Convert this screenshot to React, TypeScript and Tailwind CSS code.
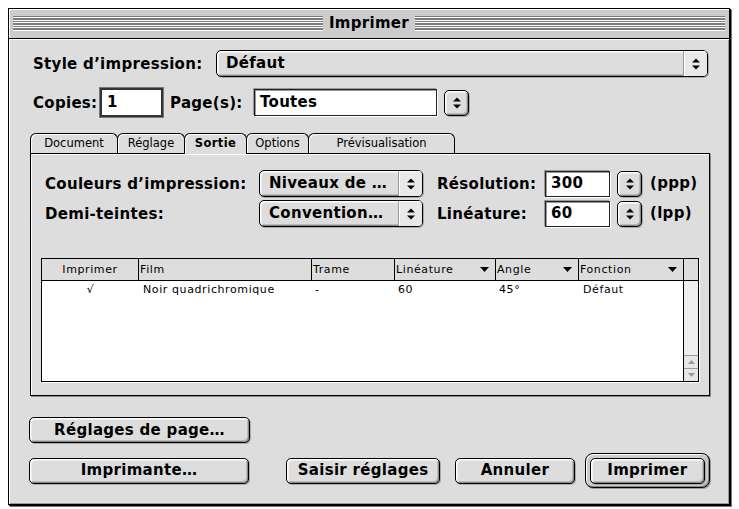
import React from 'react';

const font = "font-['DejaVu_Sans',sans-serif]";
const label = 'text-[15px] font-bold tracking-[0.3px] text-black leading-none whitespace-nowrap';
const bevel =
  'border border-black rounded-[5px] bg-[#dddddd] shadow-[inset_1px_1px_0_#fff,inset_2px_2px_0_#eeeeee,inset_-1px_-1px_0_#888,inset_-2px_-2px_0_#bbbbbb,1px_1px_0_#aaaaaa]';
const field =
  'border border-[#222] bg-white shadow-[inset_1px_1px_0_#999,1px_1px_0_#fff,-1px_-1px_0_#9a9a9a] flex items-center pl-[5px]';
const small = 'text-[11px] tracking-[0.6px] text-black leading-none whitespace-nowrap';

function UpDown({ color = '#000' }: { color?: string }) {
  return (
    <svg width="10" height="14" viewBox="0 0 10 14">
      <path d="M5 1.5 L9 5.5 L1 5.5 Z" fill={color} />
      <path d="M1 8.5 L9 8.5 L5 12.5 Z" fill={color} />
    </svg>
  );
}

function SortArrow() {
  return (
    <svg width="9" height="5" viewBox="0 0 9 5">
      <path d="M0 0 H9 L4.5 5 Z" fill="#000" />
    </svg>
  );
}

function Stepper() {
  return (
    <div className={`flex h-[26px] w-[25px] shrink-0 items-center justify-center ${bevel}`}>
      <UpDown />
    </div>
  );
}

function Popup({ text, className }: { text: string; className: string }) {
  return (
    <div className={`flex h-[27px] items-stretch overflow-hidden ${bevel} ${className}`}>
      <div className="flex flex-1 items-center pl-[9px]">
        <span className={label}>{text}</span>
      </div>
      <div className="flex w-[24px] items-center justify-center border-l border-[#9a9a9a] bg-[#e9e9e9] shadow-[inset_1px_1px_0_#fff]">
        <UpDown />
      </div>
    </div>
  );
}

function Button({ text, className }: { text: string; className: string }) {
  return (
    <div className={`flex h-[26px] items-center justify-center ${bevel} ${className}`}>
      <span className={label}>{text}</span>
    </div>
  );
}

const tabs = [
  { name: 'Document', w: 'w-[88px]' },
  { name: 'Réglage', w: 'w-[68px]' },
  { name: 'Sortie', w: 'w-[63px]', active: true },
  { name: 'Options', w: 'w-[63px]' },
  { name: 'Prévisualisation', w: 'w-[147px]' },
];

const cols = [
  { name: 'Imprimer', w: 'w-[97px]', center: true },
  { name: 'Film', w: 'w-[173px]' },
  { name: 'Trame', w: 'w-[83px]' },
  { name: 'Linéature', w: 'w-[101px]', sort: true },
  { name: 'Angle', w: 'w-[83px]', sort: true },
  { name: 'Fonction', w: 'w-[104px]', sort: true, last: true },
];

const row = ['√', 'Noir quadrichromique', '-', '60', '45°', 'Défaut'];
const rowPad = ['', 'pl-[4px]', 'pl-[3px]', 'pl-[3px]', 'pl-[3px]', 'pl-[4px]'];

export default function App() {
  return (
    <div className={`min-h-screen bg-white pl-[8px] pt-[8px] ${font}`}>
      <div className="flex h-[497px] w-[722px] flex-col border border-black bg-[#dddddd] shadow-[1px_1px_0_#000,2px_2px_0_#777]">
        {/* title bar */}
        <div className="flex h-[30px] shrink-0 items-center gap-[6px] border-b border-black bg-[#cccccc] px-[4px] shadow-[inset_1px_1px_0_#fff]">
          <div className="h-[15px] flex-1 bg-[repeating-linear-gradient(to_bottom,#7a7a7a_0px,#7a7a7a_1.25px,#ffffff_1.25px,#ffffff_2.5px)]" />
          <span className={label}>Imprimer</span>
          <div className="h-[15px] flex-1 bg-[repeating-linear-gradient(to_bottom,#7a7a7a_0px,#7a7a7a_1.25px,#ffffff_1.25px,#ffffff_2.5px)]" />
        </div>

        <div className="flex flex-1 flex-col pl-[21px] pr-[19px] shadow-[inset_1px_1px_0_#fff,inset_-1px_-1px_0_#999]">
          {/* style */}
          <div className="mt-[11px] flex items-center pl-[3px] pr-[2px]">
            <div className="w-[183px]">
              <span className={label}>Style d’impression:</span>
            </div>
            <Popup text="Défaut" className="flex-1" />
          </div>

          {/* copies / pages */}
          <div className="mt-[11px] flex h-[29px] items-center pl-[3px]">
            <div className="w-[67px]">
              <span className={label}>Copies:</span>
            </div>
            <div className="flex h-[29px] w-[63px] items-center border-2 border-[#333] bg-white pl-[5px] shadow-[0_0_0_1px_#777]">
              <span className={label}>1</span>
            </div>
            <div className="ml-[7px] w-[84px]">
              <span className={label}>Page(s):</span>
            </div>
            <div className={`h-[27px] w-[183px] ${field}`}>
              <span className={label}>Toutes</span>
            </div>
            <div className="ml-[7px]">
              <Stepper />
            </div>
          </div>

          {/* tabs */}
          <div className="mt-[16px] flex h-[20px] items-end">
            {tabs.map((t) => (
              <div
                key={t.name}
                className={`-mr-px flex h-[20px] items-center justify-center rounded-t-[6px] border-x border-t border-black bg-[#dddddd] shadow-[inset_1px_1px_0_#fff] ${t.w} ${
                  t.active ? 'relative z-10 -mb-px h-[21px]' : ''
                }`}
              >
                <span className={`text-[11.5px] leading-none text-black ${t.active ? 'font-bold tracking-[0.4px]' : ''}`}>
                  {t.name}
                </span>
              </div>
            ))}
          </div>

          {/* panel */}
          <div className="flex h-[243px] w-[680px] flex-col border border-black bg-[#dddddd] pl-[14px] shadow-[inset_1px_1px_0_#fff,1px_1px_0_#888]">
            <div className="mt-[16px] flex items-center">
              <div className="w-[214px]">
                <span className={label}>Couleurs d’impression:</span>
              </div>
              <Popup text="Niveaux de …" className="w-[164px]" />
              <div className="ml-[14px] w-[108px]">
                <span className={label}>Résolution:</span>
              </div>
              <div className={`h-[26px] w-[65px] ${field}`}>
                <span className={label}>300</span>
              </div>
              <div className="ml-[7px]">
                <Stepper />
              </div>
              <span className={`ml-[8px] ${label}`}>(ppp)</span>
            </div>

            <div className="mt-[3px] flex items-center">
              <div className="w-[214px]">
                <span className={label}>Demi-teintes:</span>
              </div>
              <Popup text="Convention…" className="w-[164px]" />
              <div className="ml-[14px] w-[108px]">
                <span className={label}>Linéature:</span>
              </div>
              <div className={`h-[26px] w-[65px] ${field}`}>
                <span className={label}>60</span>
              </div>
              <div className="ml-[7px]">
                <Stepper />
              </div>
              <span className={`ml-[8px] ${label}`}>(lpp)</span>
            </div>

            {/* table */}
            <div className="-ml-[4px] mt-[31px] flex h-[124px] w-[658px] border border-black bg-white shadow-[1px_1px_0_#fff]">
              <div className="flex flex-1 flex-col">
                <div className="flex h-[22px] border-b border-black bg-[#dddddd]">
                  {cols.map((c) => (
                    <div
                      key={c.name}
                      className={`flex h-full items-center ${c.w} ${c.last ? '' : 'border-r border-black'} ${
                        c.center ? 'justify-center' : 'justify-between pl-[1px] pr-[6px]'
                      }`}
                    >
                      <span className={small}>{c.name}</span>
                      {c.sort && <SortArrow />}
                    </div>
                  ))}
                </div>
                <div className="flex h-[17px] items-center">
                  {cols.map((c, i) => (
                    <div key={c.name} className={`flex items-center ${c.w} ${c.center ? 'justify-center' : rowPad[i]}`}>
                      <span className={small}>{row[i]}</span>
                    </div>
                  ))}
                </div>
              </div>
              <div className="flex w-[15px] flex-col border-l border-black">
                <div className="h-[22px] border-b border-black bg-[#dddddd]" />
                <div className="flex-1 bg-[#eeeeee]" />
                <div className="flex h-[13px] items-center justify-center border-t border-[#999] bg-[#e6e6e6]">
                  <svg width="7" height="4" viewBox="0 0 7 4">
                    <path d="M3.5 0 L7 4 L0 4 Z" fill="#999" />
                  </svg>
                </div>
                <div className="flex h-[13px] items-center justify-center border-t border-[#999] bg-[#e6e6e6]">
                  <svg width="7" height="4" viewBox="0 0 7 4">
                    <path d="M0 0 H7 L3.5 4 Z" fill="#999" />
                  </svg>
                </div>
              </div>
            </div>
          </div>

          {/* buttons */}
          <div className="-ml-px mt-[21px] flex">
            <Button text="Réglages de page…" className="w-[221px]" />
          </div>
          <div className="-ml-px mt-[10px] flex h-[35px] items-center">
            <Button text="Imprimante…" className="w-[221px]" />
            <Button text="Saisir réglages" className="ml-[37px] w-[155px]" />
            <Button text="Annuler" className="ml-[15px] w-[120px]" />
            <div className="ml-[10px] flex h-[35px] w-[126px] items-center rounded-[8px] border border-black bg-[#cccccc] p-[4px] shadow-[inset_1px_1px_0_#fff,inset_-1px_-1px_0_#888,1px_1px_0_#999]">
              <Button text="Imprimer" className="w-full" />
            </div>
          </div>
        </div>
      </div>
    </div>
  );
}
